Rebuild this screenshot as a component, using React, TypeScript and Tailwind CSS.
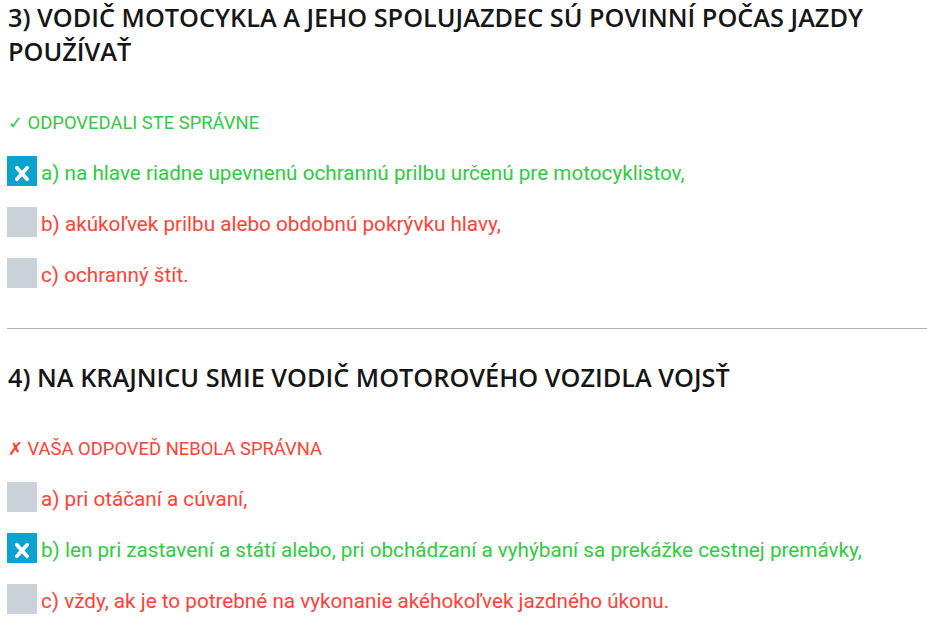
import React from "react";

type Opt = { label: string; checked: boolean; correct: boolean };

const Box = ({ checked }: { checked: boolean }) =>
  checked ? (
    <div className="w-[30px] h-[30px] shrink-0 bg-[#08a3cf]">
      <svg width="30" height="30" viewBox="0 0 30 30">
        <path d="M9.8 11.8 L20.2 23.2 M20.2 11.8 L9.8 23.2" stroke="#fff" strokeWidth="3.8" strokeLinecap="round" fill="none" />
      </svg>
    </div>
  ) : (
    <div className="w-[30px] h-[30px] shrink-0 bg-[#cad1d8]" />
  );

const Question = ({
  title,
  ok,
  options,
}: {
  title: string;
  ok: boolean;
  options: Opt[];
}) => (
  <section>
    <h2 className="pl-px text-[25.3px] leading-[34px] font-semibold text-[#161616] [font-family:'Open_Sans',sans-serif]">
      {title}
    </h2>
    <div
      className={`mt-[43px] pl-px text-[18.4px] leading-[24px] [font-family:Roboto,sans-serif] ${
        ok ? "text-[#2ecc40]" : "text-[#ff4136]"
      }`}
    >
      {ok ? "✓ ODPOVEDALI STE SPRÁVNE" : "✗ VAŠA ODPOVEĎ NEBOLA SPRÁVNA"}
    </div>
    <div className="mt-[21px] flex flex-col gap-[21px]">
      {options.map((o) => (
        <div key={o.label} className="flex items-start gap-[4px] h-[30px]">
          <Box checked={o.checked} />
          <span
            className={`pt-[2px] text-[20.7px] leading-[30px] whitespace-nowrap [font-family:Roboto,sans-serif] ${
              o.correct ? "text-[#2ecc40]" : "text-[#ff4136]"
            }`}
          >
            {o.label}
          </span>
        </div>
      ))}
    </div>
  </section>
);

export default function App() {
  return (
    <div className="w-[927px] h-[621px] overflow-hidden bg-white pl-[7px]">
      <Question
        title="3) VODIČ MOTOCYKLA A JEHO SPOLUJAZDEC SÚ POVINNÍ POČAS JAZDY POUŽÍVAŤ"
        ok={true}
        options={[
          { label: "a) na hlave riadne upevnenú ochrannú prilbu určenú pre motocyklistov,", checked: true, correct: true },
          { label: "b) akúkoľvek prilbu alebo obdobnú pokrývku hlavy,", checked: false, correct: false },
          { label: "c) ochranný štít.", checked: false, correct: false },
        ]}
      />
      <div className="mt-[40px] h-px bg-[#b3b3b3]" />
      <div className="mt-[31px]">
        <Question
          title="4) NA KRAJNICU SMIE VODIČ MOTOROVÉHO VOZIDLA VOJSŤ"
          ok={false}
          options={[
            { label: "a) pri otáčaní a cúvaní,", checked: false, correct: false },
            { label: "b) len pri zastavení a státí alebo, pri obchádzaní a vyhýbaní sa prekážke cestnej premávky,", checked: true, correct: true },
            { label: "c) vždy, ak je to potrebné na vykonanie akéhokoľvek jazdného úkonu.", checked: false, correct: false },
          ]}
        />
      </div>
    </div>
  );
}
